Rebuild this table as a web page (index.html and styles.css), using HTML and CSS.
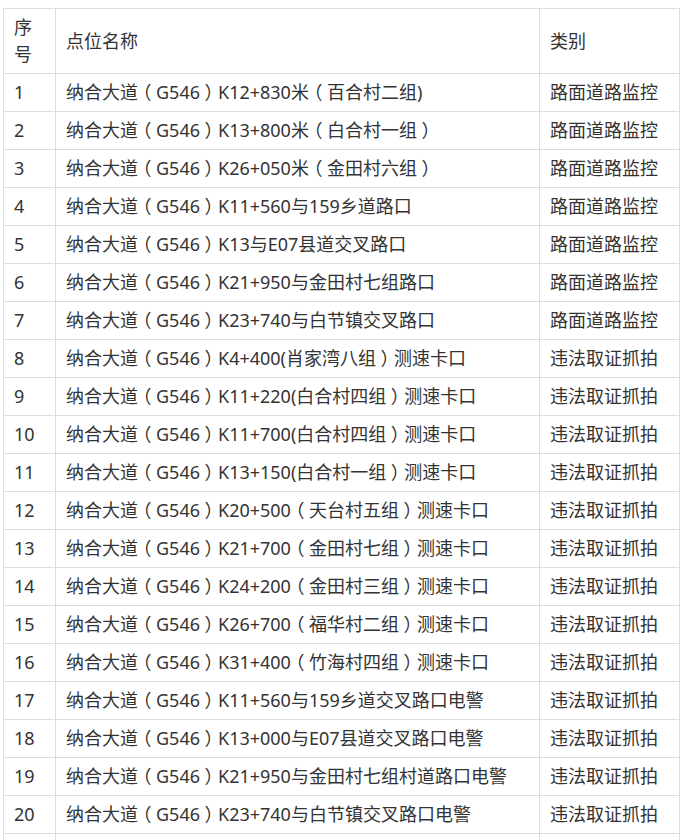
FILE: index.html
```html
<!DOCTYPE html>
<html lang="zh-CN">
<head>
<meta charset="utf-8">
<title>点位列表</title>
<link rel="stylesheet" href="styles.css">
</head>
<body>
<table class="tbl">
<colgroup><col class="c1"><col class="c2"><col class="c3"></colgroup>
<thead>
<tr><th>序号</th><th>点位名称</th><th>类别</th></tr>
</thead>
<tbody>
<tr><td>1</td><td>纳合大道<span class="fp">（</span>G546<span class="fp">）</span>K12+830米<span class="fp">（</span>百合村二组)</td><td>路面道路监控</td></tr>
<tr><td>2</td><td>纳合大道<span class="fp">（</span>G546<span class="fp">）</span>K13+800米<span class="fp">（</span>白合村一组<span class="fp">）</span></td><td>路面道路监控</td></tr>
<tr><td>3</td><td>纳合大道<span class="fp">（</span>G546<span class="fp">）</span>K26+050米<span class="fp">（</span>金田村六组<span class="fp">）</span></td><td>路面道路监控</td></tr>
<tr><td>4</td><td>纳合大道<span class="fp">（</span>G546<span class="fp">）</span>K11+560与159乡道路口</td><td>路面道路监控</td></tr>
<tr><td>5</td><td>纳合大道<span class="fp">（</span>G546<span class="fp">）</span>K13与E07县道交叉路口</td><td>路面道路监控</td></tr>
<tr><td>6</td><td>纳合大道<span class="fp">（</span>G546<span class="fp">）</span>K21+950与金田村七组路口</td><td>路面道路监控</td></tr>
<tr><td>7</td><td>纳合大道<span class="fp">（</span>G546<span class="fp">）</span>K23+740与白节镇交叉路口</td><td>路面道路监控</td></tr>
<tr><td>8</td><td>纳合大道<span class="fp">（</span>G546<span class="fp">）</span>K4+400(肖家湾八组<span class="fp">）</span>测速卡口</td><td>违法取证抓拍</td></tr>
<tr><td>9</td><td>纳合大道<span class="fp">（</span>G546<span class="fp">）</span>K11+220(白合村四组<span class="fp">）</span>测速卡口</td><td>违法取证抓拍</td></tr>
<tr><td>10</td><td>纳合大道<span class="fp">（</span>G546<span class="fp">）</span>K11+700(白合村四组<span class="fp">）</span>测速卡口</td><td>违法取证抓拍</td></tr>
<tr><td>11</td><td>纳合大道<span class="fp">（</span>G546<span class="fp">）</span>K13+150(白合村一组<span class="fp">）</span>测速卡口</td><td>违法取证抓拍</td></tr>
<tr><td>12</td><td>纳合大道<span class="fp">（</span>G546<span class="fp">）</span>K20+500<span class="fp">（</span>天台村五组<span class="fp">）</span>测速卡口</td><td>违法取证抓拍</td></tr>
<tr><td>13</td><td>纳合大道<span class="fp">（</span>G546<span class="fp">）</span>K21+700<span class="fp">（</span>金田村七组<span class="fp">）</span>测速卡口</td><td>违法取证抓拍</td></tr>
<tr><td>14</td><td>纳合大道<span class="fp">（</span>G546<span class="fp">）</span>K24+200<span class="fp">（</span>金田村三组<span class="fp">）</span>测速卡口</td><td>违法取证抓拍</td></tr>
<tr><td>15</td><td>纳合大道<span class="fp">（</span>G546<span class="fp">）</span>K26+700<span class="fp">（</span>福华村二组<span class="fp">）</span>测速卡口</td><td>违法取证抓拍</td></tr>
<tr><td>16</td><td>纳合大道<span class="fp">（</span>G546<span class="fp">）</span>K31+400<span class="fp">（</span>竹海村四组<span class="fp">）</span>测速卡口</td><td>违法取证抓拍</td></tr>
<tr><td>17</td><td>纳合大道<span class="fp">（</span>G546<span class="fp">）</span>K11+560与159乡道交叉路口电警</td><td>违法取证抓拍</td></tr>
<tr><td>18</td><td>纳合大道<span class="fp">（</span>G546<span class="fp">）</span>K13+000与E07县道交叉路口电警</td><td>违法取证抓拍</td></tr>
<tr><td>19</td><td>纳合大道<span class="fp">（</span>G546<span class="fp">）</span>K21+950与金田村七组村道路口电警</td><td>违法取证抓拍</td></tr>
<tr><td>20</td><td>纳合大道<span class="fp">（</span>G546<span class="fp">）</span>K23+740与白节镇交叉路口电警</td><td>违法取证抓拍</td></tr>
<tr><td>21</td><td>纳合大道<span class="fp">（</span>G546<span class="fp">）</span>K26+050与金田村六组路口电警</td><td>违法取证抓拍</td></tr>
</tbody>
</table>
</body>
</html>
```
FILE: styles.css
```css
html, body {
  margin: 0;
  padding: 0;
  background: #fff;
}
body {
  font-family: "Noto Sans", "Noto Sans CJK SC", sans-serif;
  font-size: 18px;
  color: #333;
}
.tbl {
  border-collapse: collapse;
  table-layout: fixed;
  width: 676px;
  margin: 8px 0 0 3px;
}
.c1 { width: 52px; }
.c2 { width: 484px; }
.c3 { width: 140px; }
.tbl th, .tbl td {
  border: 1px solid #ddd;
  padding: 5px 10px;
  line-height: 27px;
  text-align: left;
  font-weight: normal;
  vertical-align: middle;
  white-space: normal;
  word-break: break-all;
  overflow: hidden;
}
.tbl td:nth-child(3), .tbl th:nth-child(3) {
  white-space: nowrap;
}
.fp {
  font-family: "Noto Sans CJK SC", sans-serif;
  font-feature-settings: "halt";
  padding: 0 0.25em;
  line-height: 1;
}
```
